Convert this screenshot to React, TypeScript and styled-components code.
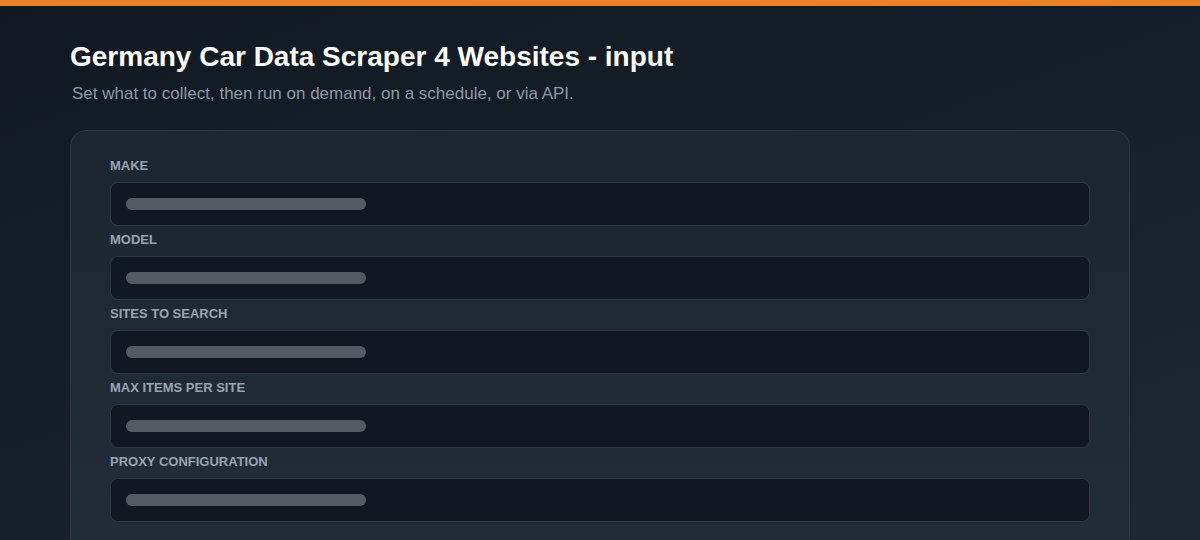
import styled, { createGlobalStyle } from "styled-components";

const GlobalStyle = createGlobalStyle`
  html, body {
    margin: 0;
    padding: 0;
  }
  body {
    background: #131b24;
    font-family: "Liberation Sans", Arial, sans-serif;
  }
`;

const Page = styled.div`
  width: 1200px;
  height: 540px;
  overflow: hidden;
  box-sizing: border-box;
  border-top: 6px solid #e8822a;
  background: linear-gradient(160deg, #111821 0%, #17212b 55%, #1c2834 100%);
  padding: 0 70px;
`;

const Title = styled.h1`
  margin: 34px 0 0;
  font-size: 28px;
  line-height: 34px;
  font-weight: 700;
  color: #ffffff;
`;

const Subtitle = styled.p`
  margin: 9px 0 0 2px;
  font-size: 17px;
  line-height: 22px;
  color: #8e99a6;
`;

const Card = styled.div`
  margin-top: 25px;
  border: 1px solid #2a3643;
  border-radius: 16px;
  background: linear-gradient(180deg, #1c2630 0%, #212d39 100%);
  padding: 27px 39px 40px;
  display: flex;
  flex-direction: column;
  gap: 6px;
`;

const Field = styled.div`
  display: flex;
  flex-direction: column;
  gap: 8px;
`;

const Label = styled.label`
  font-size: 13px;
  line-height: 16px;
  font-weight: 700;
  text-transform: uppercase;
  color: #98a4b1;
`;

const Input = styled.div`
  height: 42px;
  border: 1px solid #2c3846;
  border-radius: 8px;
  background: #111821;
  display: flex;
  align-items: center;
  padding: 0 15px;
`;

const Placeholder = styled.div<{ $w: number }>`
  width: ${(p) => p.$w}px;
  height: 12px;
  border-radius: 6px;
  background: #545a62;
`;

const fields = [
  "Make",
  "Model",
  "Sites to search",
  "Max items per site",
  "Proxy configuration",
];

export default function App() {
  return (
    <>
      <GlobalStyle />
      <Page>
        <Title>Germany Car Data Scraper 4 Websites - input</Title>
        <Subtitle>
          Set what to collect, then run on demand, on a schedule, or via API.
        </Subtitle>
        <Card>
          {fields.map((f) => (
            <Field key={f}>
              <Label>{f}</Label>
              <Input>
                <Placeholder $w={240} />
              </Input>
            </Field>
          ))}
        </Card>
      </Page>
    </>
  );
}
